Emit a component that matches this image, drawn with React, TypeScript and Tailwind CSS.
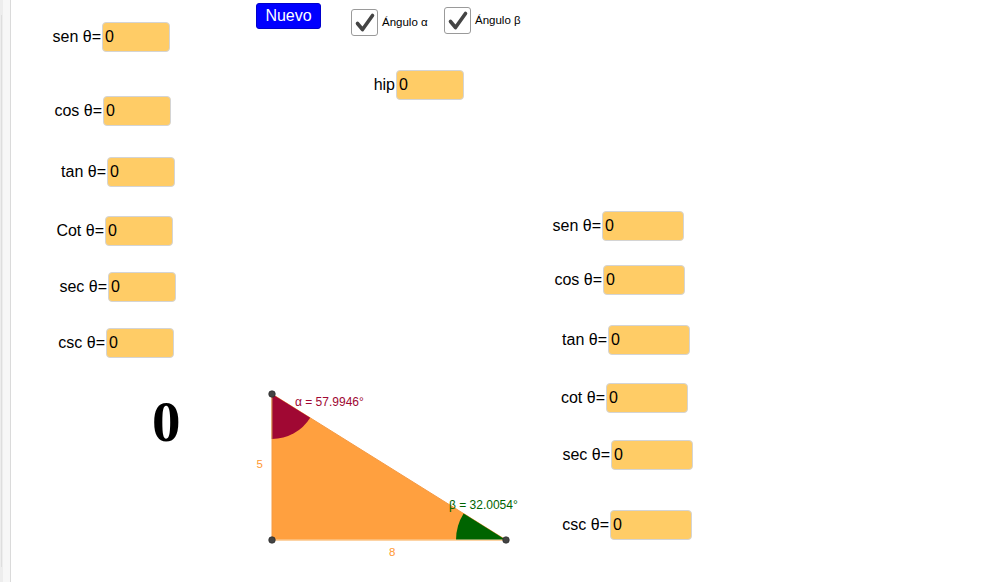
import React from "react";

const font = { fontFamily: '"Liberation Sans", Arial, sans-serif' };

// GeoGebra-style free canvas: every widget sits where the applet author dropped it.
function Field({
  label,
  className,
  wide = false,
}: {
  label: string;
  className: string;
  wide?: boolean;
}) {
  return (
    <div className={`absolute ${className}`}>
      <span className="absolute right-full top-1/2 mr-px -translate-y-1/2 whitespace-nowrap text-[16px] leading-none text-black">
        {label}
      </span>
      <div
        className={`flex h-[30px] items-center rounded-[4px] border border-[#d4d4d4] bg-[#ffcc66] pl-[2px] text-[16px] text-black ${
          wide ? "w-[82px]" : "w-[68px]"
        }`}
      >
        0
      </div>
    </div>
  );
}

function Checkbox({ label, className }: { label: string; className: string }) {
  return (
    <div className={`absolute flex items-center gap-[4px] ${className}`}>
      <div className="flex h-[27px] w-[27px] items-center justify-center rounded-[3px] border-[1.5px] border-[#9a9a9a] bg-white">
        <svg width="22" height="22" viewBox="0 0 22 22">
          <path
            d="M3.5 11.5 L8.5 17.5 L18.5 3.5"
            fill="none"
            stroke="#444"
            strokeWidth="3.6"
            strokeLinecap="round"
            strokeLinejoin="round"
          />
        </svg>
      </div>
      <span className="text-[11.5px] leading-none text-black">{label}</span>
    </div>
  );
}

function Triangle() {
  return (
    <svg
      className="absolute left-[239px] top-[380px]"
      width="290"
      height="185"
      viewBox="250 380 290 185"
    >
      <polygon
        points="272,394 272,540 506,540"
        fill="#ffa03f"
        stroke="#f59a45"
        strokeWidth="1"
      />
      <path d="M272 394 L272 439 A45 45 0 0 0 310.2 417.8 Z" fill="#a00833" />
      <path d="M506 540 L456 540 A50 50 0 0 1 463.6 513.5 Z" fill="#006400" />
      <line x1="272" y1="394" x2="272" y2="439" stroke="#c8804f" strokeWidth="1" />
      <line x1="272" y1="540" x2="506" y2="540" stroke="#ffd9a8" strokeWidth="1" />
      <text x="295" y="406" fontSize="12" fill="#a00833" style={font}>
        α = 57.9946°
      </text>
      <text x="449" y="509" fontSize="12" fill="#006400" style={font}>
        β = 32.0054°
      </text>
      <text x="256.5" y="467.5" fontSize="11.5" fill="#ff9933" style={font}>
        5
      </text>
      <text x="389" y="555.5" fontSize="11.5" fill="#ff9933" style={font}>
        8
      </text>
      {[
        [272, 394],
        [272, 540],
        [506, 540],
      ].map(([cx, cy]) => (
        <circle key={`${cx}-${cy}`} cx={cx} cy={cy} r="3.3" fill="#444" stroke="#222" strokeWidth="0.6" />
      ))}
    </svg>
  );
}

export default function App() {
  return (
    <div className="flex h-[582px] w-[1000px] overflow-hidden bg-white" style={font}>
      {/* frame edge */}
      <div className="flex h-full">
        <div className="w-[3px] bg-[#ededed] py-[15px]">
          <div className="ml-px h-full w-px bg-[#dedede]" />
        </div>
        <div className="w-[8px] border-r border-[#dadada] bg-[#f7f7f7]" />
      </div>

      <div className="relative flex-1">
        <button className="absolute left-[245px] top-[3px] h-[26px] w-[65px] rounded-[3px] border border-[#0000cc] bg-[#0000ff] text-[16px] leading-none text-white">
          Nuevo
        </button>
        <Checkbox label="Ángulo α" className="left-[340px] top-[9px]" />
        <Checkbox label="Ángulo β" className="left-[433px] top-[7px]" />

        <Field label="hip" className="left-[385px] top-[70px]" />

        <Field label="sen θ=" className="left-[91px] top-[22px]" />
        <Field label="cos θ=" className="left-[92px] top-[96px]" />
        <Field label="tan θ=" className="left-[96px] top-[157px]" />
        <Field label="Cot θ=" className="left-[94px] top-[216px]" />
        <Field label="sec θ=" className="left-[97px] top-[272px]" />
        <Field label="csc θ=" className="left-[95px] top-[328px]" />

        <Field wide label="sen θ=" className="left-[591px] top-[211px]" />
        <Field wide label="cos θ=" className="left-[592px] top-[265px]" />
        <Field wide label="tan θ=" className="left-[597px] top-[325px]" />
        <Field wide label="cot θ=" className="left-[595px] top-[383px]" />
        <Field wide label="sec θ=" className="left-[600px] top-[440px]" />
        <Field wide label="csc θ=" className="left-[599px] top-[510px]" />

        <div
          className="absolute left-[141px] top-[393px] text-[57px] font-bold leading-none text-black"
          style={{ fontFamily: '"Liberation Serif", "Times New Roman", serif' }}
        >
          0
        </div>

        <Triangle />
      </div>
    </div>
  );
}
